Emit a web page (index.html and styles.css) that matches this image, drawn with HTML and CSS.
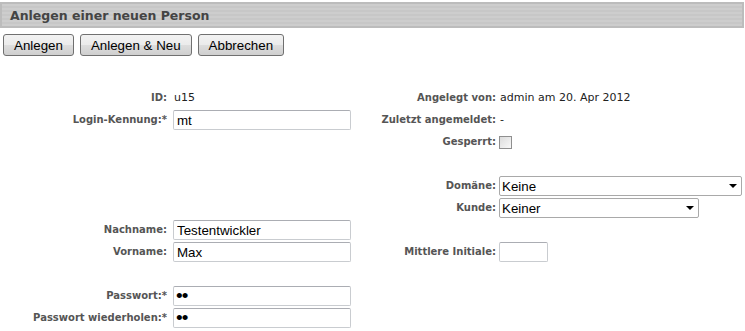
FILE: index.html
```html
<!DOCTYPE html>
<html lang="de">
<head>
  <meta charset="UTF-8">
  <title>Anlegen einer neuen Person</title>
  <link rel="stylesheet" href="styles.css">
</head>
<body>
  <div class="titlebar">
    <h1>Anlegen einer neuen Person</h1>
  </div>

  <div class="toolbar">
    <button type="button">Anlegen</button>
    <button type="button">Anlegen &amp; Neu</button>
    <button type="button">Abbrechen</button>
  </div>

  <form class="person-form">
    <div class="row">
      <label class="lbl">ID:</label>
      <span class="val">u15</span>
      <label class="lbl lbl-right">Angelegt von:</label>
      <span class="val val-right">admin am 20. Apr 2012</span>
    </div>
    <div class="row">
      <label class="lbl" for="login">Login-Kennung:*</label>
      <span class="field"><input type="text" id="login" value="mt"></span>
      <label class="lbl lbl-right">Zuletzt angemeldet:</label>
      <span class="val val-right">-</span>
    </div>
    <div class="row">
      <span></span>
      <span></span>
      <label class="lbl lbl-right" for="locked">Gesperrt:</label>
      <span class="field field-right"><input type="checkbox" id="locked" class="check"></span>
    </div>
    <div class="row"></div>
    <div class="row">
      <span></span>
      <span></span>
      <label class="lbl lbl-right" for="domain">Domäne:</label>
      <span class="field field-right">
        <span class="select-wrap wide">
          <select id="domain"><option>Keine</option></select>
        </span>
      </span>
    </div>
    <div class="row">
      <span></span>
      <span></span>
      <label class="lbl lbl-right" for="customer">Kunde:</label>
      <span class="field field-right">
        <span class="select-wrap medium">
          <select id="customer"><option>Keiner</option></select>
        </span>
      </span>
    </div>
    <div class="row">
      <label class="lbl" for="lastname">Nachname:</label>
      <span class="field"><input type="text" id="lastname" value="Testentwickler"></span>
    </div>
    <div class="row">
      <label class="lbl" for="firstname">Vorname:</label>
      <span class="field"><input type="text" id="firstname" value="Max"></span>
      <label class="lbl lbl-right" for="initial">Mittlere Initiale:</label>
      <span class="field field-right"><input type="text" id="initial" class="short"></span>
    </div>
    <div class="row"></div>
    <div class="row">
      <label class="lbl" for="pw">Passwort:*</label>
      <span class="field"><input type="password" id="pw" class="pw" value="mt"></span>
    </div>
    <div class="row">
      <label class="lbl" for="pw2">Passwort wiederholen:*</label>
      <span class="field"><input type="password" id="pw2" class="pw" value="mt"></span>
    </div>
  </form>
</body>
</html>
```

FILE: styles.css
```css
body {
  margin: 0;
  padding-top: 2px;
  background: #fff;
  font-family: "DejaVu Sans", Verdana, sans-serif;
  font-size: 11px;
  color: #222;
}

.titlebar {
  height: 26px;
  margin-right: 1px;
  box-sizing: border-box;
  border: 2px solid #bcbcbc;
  background: repeating-linear-gradient(#cdcdcd 0, #cdcdcd 2px, #c7c7c7 2px, #c7c7c7 4px);
  display: flex;
  align-items: center;
  padding-left: 8px;
}

.titlebar h1 {
  margin: 0;
  font-size: 12.5px;
  font-weight: bold;
  color: #444;
}

.toolbar {
  display: flex;
  gap: 6px;
  margin: 6px 0 0 3px;
}

.toolbar button {
  height: 22px;
  padding: 0 10px;
  font-family: "Liberation Sans", Arial, sans-serif;
  font-size: 13.33px;
  color: #000;
  border: 1px solid #707070;
  border-radius: 3px;
  background: linear-gradient(#f2f2f2 0%, #ebebeb 50%, #dddddd 51%, #cfcfcf 100%);
  cursor: pointer;
}

.person-form {
  margin-top: 32px;
}

.row {
  display: grid;
  grid-template-columns: 170px 182px 145px 1fr;
  height: 22px;
  align-items: start;
}

.lbl {
  line-height: 20px;
  text-align: right;
  padding-right: 3px;
  font-size: 10px;
  font-weight: bold;
  color: #555;
  white-space: nowrap;
}

.lbl-right {
  padding-right: 1px;
}

.val {
  line-height: 20px;
  padding-left: 4px;
}

.val-right {
  padding-left: 3px;
}

.field {
  padding-left: 3px;
  display: flex;
  align-items: center;
  height: 20px;
}

.field-right {
  padding-left: 2px;
}

input[type="text"],
input[type="password"],
select {
  box-sizing: border-box;
  height: 20px;
  font-family: "Liberation Sans", Arial, sans-serif;
  font-size: 13.33px;
  color: #000;
  background: #fff;
  border: 1px solid #c9ccd0;
  border-top-color: #abadb3;
  border-radius: 2px;
  padding: 0 3px;
  margin: 0;
  outline: none;
}

input[type="text"],
input[type="password"] {
  width: 178px;
}

input.short {
  width: 49px;
}

input.pw {
  font-size: 19px;
  letter-spacing: -1px;
  padding-left: 2px;
}

.select-wrap {
  position: relative;
  display: block;
}

.select-wrap select {
  appearance: none;
  -webkit-appearance: none;
  width: 100%;
  padding: 0 16px 0 2px;
  border-color: #a9a9a9;
}

.select-wrap::after {
  content: "";
  position: absolute;
  right: 5px;
  top: 8px;
  border-left: 4px solid transparent;
  border-right: 4px solid transparent;
  border-top: 4px solid #000;
  pointer-events: none;
}

.select-wrap.wide {
  width: 243px;
}

.select-wrap.medium {
  width: 200px;
}

.check {
  appearance: none;
  -webkit-appearance: none;
  width: 13px;
  height: 13px;
  margin: 0;
  border: 1px solid #8f8f8f;
  background: linear-gradient(135deg, #dcdcdc, #f8f8f8);
}
```
